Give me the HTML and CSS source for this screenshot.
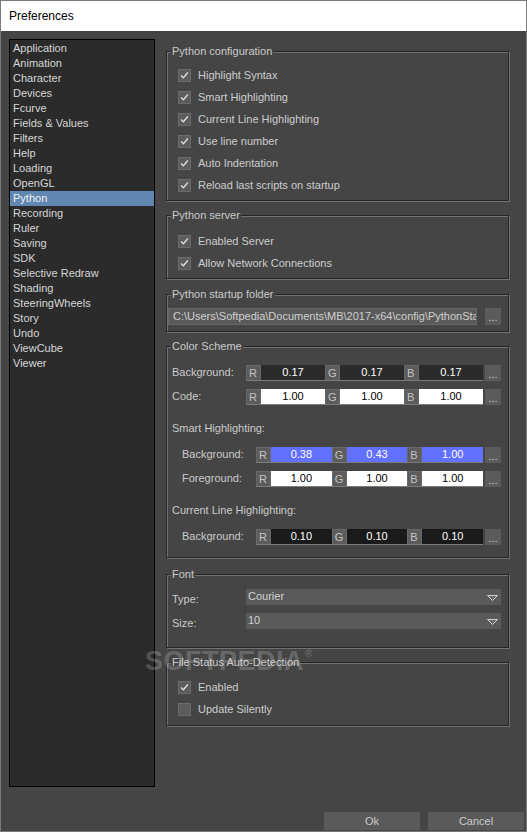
FILE: index.html
```html
<!DOCTYPE html>
<html>
<head>
<meta charset="utf-8">
<title>Preferences</title>
<link rel="stylesheet" href="styles.css">
</head>
<body>
<div class="window">
  <div class="titlebar">Preferences</div>
  <div class="body">
    <ul class="sidebar">
      <li>Application</li>
      <li>Animation</li>
      <li>Character</li>
      <li>Devices</li>
      <li>Fcurve</li>
      <li>Fields &amp; Values</li>
      <li>Filters</li>
      <li>Help</li>
      <li>Loading</li>
      <li>OpenGL</li>
      <li class="selected">Python</li>
      <li>Recording</li>
      <li>Ruler</li>
      <li>Saving</li>
      <li>SDK</li>
      <li>Selective Redraw</li>
      <li>Shading</li>
      <li>SteeringWheels</li>
      <li>Story</li>
      <li>Undo</li>
      <li>ViewCube</li>
      <li>Viewer</li>
    </ul>
    <div class="main">
      <section class="group g-config">
        <div class="group-title">Python configuration</div>
        <div class="checks">
          <div class="check"><span class="box on"><svg viewBox="0 0 13 13"><path d="M2.5 6.5 L5.2 9.2 L10.5 3"/></svg></span>Highlight Syntax</div>
          <div class="check"><span class="box on"><svg viewBox="0 0 13 13"><path d="M2.5 6.5 L5.2 9.2 L10.5 3"/></svg></span>Smart Highlighting</div>
          <div class="check"><span class="box on"><svg viewBox="0 0 13 13"><path d="M2.5 6.5 L5.2 9.2 L10.5 3"/></svg></span>Current Line Highlighting</div>
          <div class="check"><span class="box on"><svg viewBox="0 0 13 13"><path d="M2.5 6.5 L5.2 9.2 L10.5 3"/></svg></span>Use line number</div>
          <div class="check"><span class="box on"><svg viewBox="0 0 13 13"><path d="M2.5 6.5 L5.2 9.2 L10.5 3"/></svg></span>Auto Indentation</div>
          <div class="check"><span class="box on"><svg viewBox="0 0 13 13"><path d="M2.5 6.5 L5.2 9.2 L10.5 3"/></svg></span>Reload last scripts on startup</div>
        </div>
      </section>

      <section class="group g-server">
        <div class="group-title">Python server</div>
        <div class="checks">
          <div class="check"><span class="box on"><svg viewBox="0 0 13 13"><path d="M2.5 6.5 L5.2 9.2 L10.5 3"/></svg></span>Enabled Server</div>
          <div class="check"><span class="box on"><svg viewBox="0 0 13 13"><path d="M2.5 6.5 L5.2 9.2 L10.5 3"/></svg></span>Allow Network Connections</div>
        </div>
      </section>

      <section class="group g-folder">
        <div class="group-title">Python startup folder</div>
        <div class="pathrow">
          <div class="path">C:\Users\Softpedia\Documents\MB\2017-x64\config\PythonStartup</div>
          <div class="dots">...</div>
        </div>
      </section>

      <section class="group g-colors">
        <div class="group-title">Color Scheme</div>
        <div class="crow first">
          <div class="lbl">Background:</div>
          <div class="fields">
            <div class="ch">R</div><div class="val dark">0.17</div>
            <div class="ch">G</div><div class="val dark">0.17</div>
            <div class="ch">B</div><div class="val dark">0.17</div>
          </div>
          <div class="dots">...</div>
        </div>
        <div class="crow">
          <div class="lbl">Code:</div>
          <div class="fields">
            <div class="ch">R</div><div class="val white">1.00</div>
            <div class="ch">G</div><div class="val white">1.00</div>
            <div class="ch">B</div><div class="val white">1.00</div>
          </div>
          <div class="dots">...</div>
        </div>
        <div class="sublabel">Smart Highlighting:</div>
        <div class="crow indent after-label">
          <div class="lbl">Background:</div>
          <div class="fields">
            <div class="ch">R</div><div class="val blue">0.38</div>
            <div class="ch">G</div><div class="val blue">0.43</div>
            <div class="ch">B</div><div class="val blue">1.00</div>
          </div>
          <div class="dots">...</div>
        </div>
        <div class="crow indent">
          <div class="lbl">Foreground:</div>
          <div class="fields">
            <div class="ch">R</div><div class="val white">1.00</div>
            <div class="ch">G</div><div class="val white">1.00</div>
            <div class="ch">B</div><div class="val white">1.00</div>
          </div>
          <div class="dots">...</div>
        </div>
        <div class="sublabel">Current Line Highlighting:</div>
        <div class="crow indent after-label">
          <div class="lbl">Background:</div>
          <div class="fields">
            <div class="ch">R</div><div class="val black">0.10</div>
            <div class="ch">G</div><div class="val black">0.10</div>
            <div class="ch">B</div><div class="val black">0.10</div>
          </div>
          <div class="dots">...</div>
        </div>
      </section>

      <section class="group g-font">
        <div class="group-title">Font</div>
        <div class="frow">
          <div class="lbl">Type:</div>
          <div class="select"><span>Courier</span><svg class="arrow" viewBox="0 0 11 6"><path d="M0.5 0.5 H10.5 L5.5 5.5 Z"/></svg></div>
        </div>
        <div class="frow">
          <div class="lbl">Size:</div>
          <div class="select"><span>10</span><svg class="arrow" viewBox="0 0 11 6"><path d="M0.5 0.5 H10.5 L5.5 5.5 Z"/></svg></div>
        </div>
      </section>

      <section class="group g-file">
        <div class="group-title">File Status Auto-Detection</div>
        <div class="checks">
          <div class="check"><span class="box on"><svg viewBox="0 0 13 13"><path d="M2.5 6.5 L5.2 9.2 L10.5 3"/></svg></span>Enabled</div>
          <div class="check"><span class="box"></span>Update Silently</div>
        </div>
      </section>
    </div>
  </div>
  <div class="footer">
    <button class="btn">Ok</button>
    <button class="btn">Cancel</button>
  </div>
  <div class="watermark">SOFTPEDIA<span class="reg">®</span></div>
</div>
</body>
</html>
```

FILE: styles.css
```css
* { box-sizing: border-box; }

html, body {
  margin: 0;
  padding: 0;
  background: #444444;
}

body {
  font-family: "Liberation Sans", Arial, sans-serif;
  font-size: 11px;
  color: #c9c9c9;
}

.window {
  position: relative;
  width: 527px;
  height: 832px;
  border: 1px solid #7a7a7a;
  background: #454545;
  display: flex;
  flex-direction: column;
  overflow: hidden;
}

.titlebar {
  height: 30px;
  line-height: 31px;
  background: #ffffff;
  color: #000000;
  font-size: 12px;
  padding-left: 8px;
  flex: none;
}

.body {
  display: flex;
  padding: 8px 0 0 8px;
}

.sidebar {
  list-style: none;
  margin: 0;
  padding: 1px 0 0;
  width: 146px;
  height: 748px;
  border: 1px solid #000000;
  background: #2b2b2b;
  flex: none;
}

.sidebar li {
  height: 15px;
  line-height: 15px;
  padding-left: 3px;
  color: #d6d6d6;
  white-space: nowrap;
}

.sidebar li.selected {
  background: #5f87b2;
  color: #f0f0f0;
}

.main {
  margin-left: 11px;
  width: 343px;
  padding-top: 12px;
  display: flex;
  flex-direction: column;
}

.group {
  border: 1px solid #262626;
  box-shadow: inset 1px 1px 0 #727272, 1px 1px 0 #727272;
}

.group-title {
  width: fit-content;
  height: 13px;
  line-height: 13px;
  margin: -7px 0 0 4px;
  padding: 0 1px;
  background: #454545;
  color: #cacaca;
  white-space: nowrap;
}

/* vertical rhythm per group */
.g-config { padding-bottom: 4px; }
.g-config .checks { padding-top: 6px; }

.g-server { margin-top: 14px; padding-bottom: 4px; }
.g-server .checks { padding-top: 8px; }

.g-folder { margin-top: 15px; padding-bottom: 6px; }
.g-folder .pathrow { margin-top: 7px; }

.g-colors { margin-top: 14px; padding-bottom: 12px; }

.g-font { margin-top: 16px; padding-bottom: 18px; }
.g-font .frow { margin-top: 8px; }

.g-file { margin-top: 14px; padding-bottom: 5px; }
.g-file .checks { padding-top: 7px; }

/* checkboxes */
.check {
  display: flex;
  align-items: center;
  height: 22px;
  padding-left: 11px;
  color: #cdcdcd;
  white-space: nowrap;
}

.box {
  width: 13px;
  height: 13px;
  margin-right: 7px;
  background: #5c5c5c;
  border: 1px solid #6a6a6a;
  flex: none;
  display: flex;
}

.box svg {
  width: 11px;
  height: 11px;
}

.box svg path {
  fill: none;
  stroke: #dcdcdc;
  stroke-width: 1.7;
}

/* path row */
.pathrow {
  display: flex;
  height: 17px;
  padding: 0 7px 0 1px;
}

.path {
  flex: 1;
  min-width: 0;
  height: 17px;
  line-height: 15px;
  padding-left: 4px;
  background: #5a5a5a;
  border: 1px solid #666666;
  color: #cfcfcf;
  white-space: nowrap;
  overflow: hidden;
}

.dots {
  width: 16px;
  flex: none;
  background: #5b5b5b;
  color: #cfcfcf;
  text-align: center;
  line-height: 18px;
  font-size: 11px;
  overflow: hidden;
}

.pathrow .dots {
  margin-left: 8px;
  height: 17px;
}

/* color rows */
.crow {
  display: flex;
  height: 16px;
  padding: 0 7px 0 5px;
  margin-top: 8px;
}

.crow.first { margin-top: 12px; }
.crow.after-label { margin-top: 12px; }

.crow.indent {
  padding-left: 15px;
}

.crow .lbl {
  width: 74px;
  flex: none;
  line-height: 14px;
  color: #cacaca;
}

.fields {
  flex: 1;
  display: flex;
  height: 16px;
  border-bottom: 1px solid #7c7c7c;
}

.ch {
  width: 15px;
  flex: none;
  background: #5c5c5c;
  border: 1px solid #696969;
  border-bottom: none;
  padding-left: 2px;
  line-height: 14px;
  color: #c4c4c4;
}

.val {
  flex: 1;
  text-align: center;
  line-height: 15px;
}

.val.dark { background: #2b2b2b; color: #ffffff; }
.val.white { background: #ffffff; color: #000000; }
.val.blue { background: #6170ff; color: #ffffff; }
.val.black { background: #1a1a1a; color: #ffffff; }

.crow .dots {
  margin-left: 2px;
  height: 16px;
}

.sublabel {
  height: 13px;
  line-height: 13px;
  margin: 17px 0 0 5px;
  color: #cacaca;
}

/* font rows */
.frow {
  display: flex;
  height: 16px;
  padding: 0 7px 0 5px;
}

.frow .lbl {
  width: 74px;
  flex: none;
  line-height: 20px;
  color: #cacaca;
}

.select {
  flex: 1;
  display: flex;
  justify-content: space-between;
  align-items: center;
  background: #5a5a5a;
  padding: 0 3px 0 2px;
  color: #d2d2d2;
}

.select span {
  line-height: 14px;
  align-self: flex-start;
}

.arrow {
  width: 11px;
  height: 6px;
  margin-top: 2px;
}

.arrow path {
  fill: #6a6a6a;
  stroke: #cfcfcf;
  stroke-width: 1;
}

/* footer */
.footer {
  margin-top: auto;
  display: flex;
  justify-content: flex-end;
  gap: 8px;
  padding: 0 2px 1px 0;
}

.btn {
  width: 96px;
  height: 18px;
  border: none;
  background: #5a5a5a;
  color: #cbcbcb;
  font-family: "Liberation Sans", Arial, sans-serif;
  font-size: 11px;
  padding: 0;
}

/* watermark overlay */
.watermark {
  position: absolute;
  left: 144px;
  top: 645px;
  font-family: "Liberation Sans", Arial, sans-serif;
  font-weight: bold;
  font-size: 27px;
  letter-spacing: 0.5px;
  color: rgba(255, 255, 255, 0.2);
  pointer-events: none;
  white-space: nowrap;
}

.watermark .reg {
  font-size: 10px;
  vertical-align: top;
  position: relative;
  top: 2px;
  margin-left: 1px;
}
```
